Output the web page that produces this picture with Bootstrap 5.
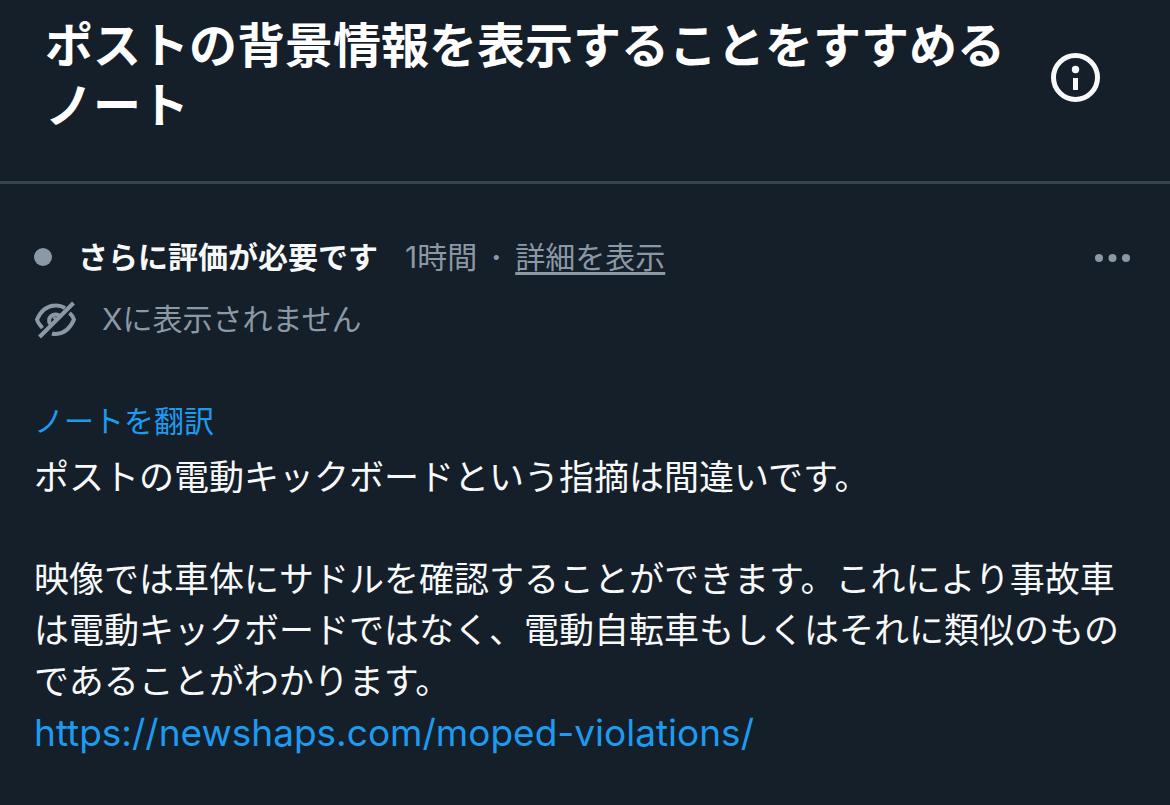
<!DOCTYPE html>
<html lang="ja" data-bs-theme="dark">
<head>
<meta charset="utf-8">
<meta name="viewport" content="width=device-width, initial-scale=1">
<title>コミュニティノート</title>
<link href="https://cdn.jsdelivr.net/npm/bootstrap@5.3.0/dist/css/bootstrap.min.css" rel="stylesheet">
<style>
body{background:#151f29;color:#f7f9f9;font-family:Inter,"Noto Sans CJK JP",sans-serif}
.note-head{border-bottom:3px solid #38444d;padding:16px 70px 45px 45px}
.note-title{font-size:48px;line-height:60px;font-weight:700}
.note-body{padding:48px 36px 40px 34px}
.muted{color:#8b98a5}
.bare{background:none;border:0;padding:0}
.meta-line{font-size:30px;line-height:50px}
.dot{width:18px;height:18px;background:#8b98a5;margin-right:26px}
.status{margin-right:27px}
.sep{font-weight:700;margin:0 14px}
.eye-row{gap:24px;margin:12px 0 52px}
.translate{margin-bottom:6px}
.note-link{color:#1d9bf0;text-decoration:none}
.note-url{font-size:37px}
.note-text{font-size:35px;line-height:51px}
.more-link{text-decoration:underline;text-decoration-thickness:3px;text-underline-offset:4px}
</style>
</head>
<body>
<header class="note-head d-flex align-items-center justify-content-between">
<h1 class="note-title mb-0">ポストの背景情報を表示することをすすめるノート</h1>
<button type="button" class="bare text-reset flex-shrink-0 mt-1" aria-label="情報"><svg class="d-block" width="50" height="50" viewBox="0 0 50 50"><circle cx="25.500" cy="24.500" r="22" fill="none" stroke="currentColor" stroke-width="5"/><circle cx="25.500" cy="16.500" r="3.700" fill="currentColor"/><path d="M23 25h5v12h-5z" fill="currentColor"/></svg></button>
</header>
<main class="note-body">
<div class="meta-line d-flex align-items-center">
<span class="dot rounded-circle"></span>
<strong class="status">さらに評価が必要です</strong>
<span class="muted">1時間</span>
<span class="muted sep">·</span>
<a href="#" class="muted more-link">詳細を表示</a>
<button type="button" class="bare muted ms-auto" aria-label="その他"><svg class="d-block" width="40" height="12" viewBox="0 0 40 12" fill="currentColor"><circle cx="5" cy="7" r="4"/><circle cx="18.500" cy="7" r="4"/><circle cx="32" cy="7" r="4"/></svg></button>
</div>
<div class="meta-line eye-row muted d-flex align-items-center">
<svg width="44" height="40" viewBox="0 0 44 40" fill="none" stroke="currentColor" stroke-width="4" aria-hidden="true"><path d="M5.500 38L39.500 4"/><path d="M8.500 29Q4 24 3 20.500Q9 7 21 6.500Q26 6 31 9"/><path d="M35.500 14Q39 17 40 20.500Q34 34.500 22 35Q20 35.200 18 34.500"/><path d="M16 25C13 18.500 18.500 13.500 25.500 16.500"/><path d="M20 20.500L22 18.500"/></svg>
<span>Xに表示されません</span>
</div>
<div class="meta-line translate"><a class="note-link" href="#">ノートを翻訳</a></div>
<p class="note-text">ポストの電動キックボードという指摘は間違いです。<br><br>映像では車体にサドルを確認することができます。これにより事故車は電動キックボードではなく、電動自転車もしくはそれに類似のものであることがわかります。<br><a class="note-link note-url" href="https://newshaps.com/moped-violations/">https://newshaps.com/moped-violations/</a></p>
</main>
<script src="https://cdn.jsdelivr.net/npm/bootstrap@5.3.0/dist/js/bootstrap.bundle.min.js"></script>
</body>
</html>
